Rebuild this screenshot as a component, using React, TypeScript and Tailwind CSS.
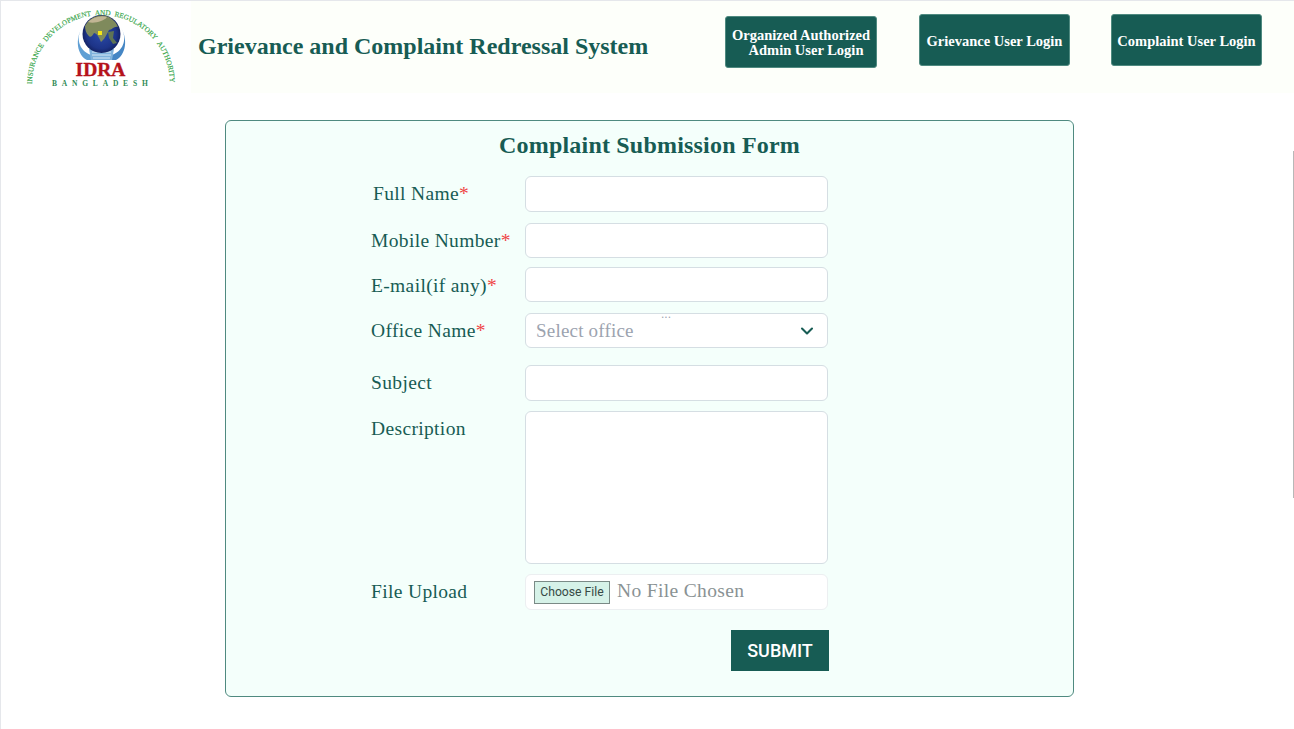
import { ChevronDown } from 'lucide-react';

const serif = "font-['Liberation_Serif',serif]";

function Logo() {
  return (
    <svg width="190" height="92" viewBox="0 0 190 92" className="shrink-0">
      <defs>
        <radialGradient id="globe" cx="50%" cy="50%" r="55%">
          <stop offset="0%" stopColor="#2a4aa8" />
          <stop offset="70%" stopColor="#1d3488" />
          <stop offset="100%" stopColor="#101c55" />
        </radialGradient>
        <path id="arc" d="M31 83 A69 69 0 0 1 169 83" />
      </defs>
      <rect width="190" height="92" fill="#ffffff" />
      {/* hands under the globe */}
      <path d="M81 27 C75 36 77 49 90 54 L92 59 L86 59 C76 54 74 38 81 27Z" fill="#5f9fd4" />
      <path d="M120 27 C126 36 124 49 111 54 L109 59 L115 59 C125 54 127 38 120 27Z" fill="#4586c4" />
      <path d="M88 48 L113 48 L111 59 L90 59Z" fill="#7fb2dc" />
      <path d="M91 51H110M91 54H110M92 57H109" stroke="#eef5fb" strokeWidth="0.8" />
      <circle cx="100.5" cy="33" r="19" fill="url(#globe)" />
      {/* land */}
      <path d="M84 25 C88 17 97 13 105 15 C111 17 115 21 117 26 C113 25 111 29 108 29 C106 33 103 39 100 41 C98 37 97 33 93 32 C91 36 89 37 87 34 C85 32 84 28 84 25Z" fill="#7f8a5c" />
      <path d="M87 21 C92 16 100 14 106 16 C103 20 93 23 87 21Z" fill="#c2b594" />
      <path d="M107 31 L113 30 L112 37 L116 42 L112 43 L108 37Z" fill="#5f7454" />
      <rect x="97" y="30" width="4" height="4" fill="#f5e616" />
      <text fontFamily="Liberation Serif, serif" fontSize="7.2" fill="#35a548" stroke="#35a548" strokeWidth="0.15">
        <textPath href="#arc" textLength="215" lengthAdjust="spacing">{'INSURANCE\u00a0\u00a0DEVELOPMENT\u00a0\u00a0AND\u00a0\u00a0REGULATORY\u00a0\u00a0AUTHORITY'}</textPath>
      </text>
      <text x="99.5" y="75" textAnchor="middle" fontFamily="Liberation Serif, serif" fontWeight="700" fontSize="19.5" fill="#b5121b" stroke="#b5121b" strokeWidth="0.35">IDRA</text>
      <text x="51" y="85" fontFamily="Liberation Serif, serif" fontWeight="700" fontSize="7.5" fill="#2f8a55" letterSpacing="4.8">BANGLADESH</text>
    </svg>
  );
}

function HeaderButton({ children, className }: { children: React.ReactNode; className: string }) {
  return (
    <button className={`h-[52px] pt-[2px] bg-[#175c54] border border-[#4f8a80] rounded-[3px] text-white font-bold text-[14.5px] leading-[15px] text-center ${serif} ${className}`}>
      {children}
    </button>
  );
}

function Label({ name, required, className = '' }: { name: string; required?: boolean; className?: string }) {
  return (
    <label className={`w-[154px] shrink-0 text-[#175c54] text-[19.5px] tracking-[0.35px] ${serif} ${className}`}>
      {name}
      {required && <span className="text-[#ef4444]">*</span>}
    </label>
  );
}

const inputCls = 'w-[303px] bg-white border border-[#d5dee3] rounded-[6px] outline-none';

function Row({ name, required, className = '', labelClass = '', inputClass = 'h-[35px]' }: { name: string; required?: boolean; className?: string; labelClass?: string; inputClass?: string }) {
  return (
    <div className={`flex items-center ${className}`}>
      <Label name={name} required={required} className={labelClass} />
      <input type="text" className={`${inputCls} ${inputClass}`} />
    </div>
  );
}

export default function App() {
  return (
    <div className="relative min-h-[729px] bg-white border-t border-l border-[#e5e7eb] overflow-hidden">
      {/* header */}
      <header className="flex h-[92px] bg-[#fdfffa]">
        <Logo />
        <h1 className={`w-[534px] pl-[7px] pt-[27px] text-[#175c54] font-bold text-[24px] whitespace-nowrap ${serif}`}>
          Grievance and Complaint Redressal System
        </h1>
        <HeaderButton className="w-[152px] mt-[15px]">
          Organized Authorized
          <br />
          <span className="pl-[10px]">Admin User Login</span>
        </HeaderButton>
        <HeaderButton className="w-[151px] mt-[13px] ml-[42px]">Grievance User Login</HeaderButton>
        <HeaderButton className="w-[151px] mt-[13px] ml-[41px]">Complaint User Login</HeaderButton>
      </header>

      {/* form card */}
      <main className="ml-[224px] mt-[27px] w-[849px] h-[577px] bg-[#f4fffb] border border-[#4f8a80] rounded-[6px]">
        <h2 className={`pt-[6px] h-[55px] text-center text-[#175c54] font-bold text-[24px] tracking-[0.2px] ${serif}`}>
          Complaint Submission Form
        </h2>
        <div className="pl-[145px]">
          <Row name="Full Name" required labelClass="pl-[2px]" inputClass="h-[36px]" />
          <Row name="Mobile Number" required className="mt-[11px]" />
          <Row name="E-mail(if any)" required className="mt-[9px]" labelClass="pt-[3px]" />
          <div className="flex items-center mt-[11px]">
            <Label name="Office Name" required />
            <div className={`${inputCls} relative h-[35px] flex items-center justify-between pl-[10px] pr-[10px]`}>
              <span className={`pt-[1px] text-[#9ca3af] text-[19px] tracking-[0.2px] ${serif}`}>Select office</span>
              <span className="absolute left-[135px] top-[-6px] text-[#9ca3af] text-[12px] leading-[12px] font-['Liberation_Sans',sans-serif]">...</span>
              <ChevronDown size={20} strokeWidth={2.5} className="text-[#175c54]" />
            </div>
          </div>
          <Row name="Subject" className="mt-[17px]" inputClass="h-[36px]" />
          <div className="flex items-start mt-[10px]">
            <Label name="Description" className="pt-[3px]" />
            <textarea className={`${inputCls} h-[153px] resize-none block`} />
          </div>
          <div className="flex items-center mt-[10px]">
            <Label name="File Upload" />
            <div className="w-[303px] h-[36px] bg-white border border-[#eceff1] rounded-[6px] flex items-center pl-[8px]">
              <button className="w-[76px] h-[23px] bg-[#d6f2e8] border border-[#7a8a86] text-[#374a46] text-[12.2px] font-['Roboto',sans-serif]">
                Choose File
              </button>
              <span className={`ml-[7px] -mt-[2px] text-[#8a9294] text-[19.5px] tracking-[0.35px] ${serif}`}>No File Chosen</span>
            </div>
          </div>
          <div className="flex justify-end w-[458px] mt-[20px]">
            <button className="w-[98px] h-[41px] bg-[#175c54] text-white text-[18px] font-medium font-['Roboto',sans-serif]">
              SUBMIT
            </button>
          </div>
        </div>
      </main>

      {/* scrollbar sliver at the right edge */}
      <div className="absolute right-0 top-[150px] w-px h-[347px] bg-[#b8b8b8]" />
    </div>
  );
}
